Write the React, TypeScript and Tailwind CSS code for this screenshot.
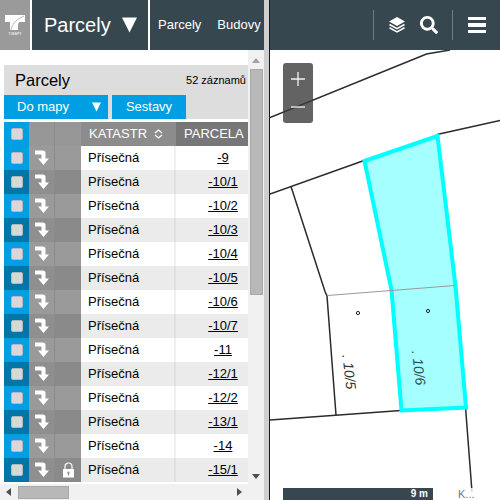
import React from "react";
import { FaSearch } from "react-icons/fa";

const rows = ["-9","-10/1","-10/2","-10/3","-10/4","-10/5","-10/6","-10/7","-11","-12/1","-12/2","-13/1","-14","-15/1"];

function Tri({ className }: { className: string }) {
  return (
    <svg viewBox="0 0 16 16" className={className}>
      <polygon points="0,0 16,0 8,16" fill="#fff" />
    </svg>
  );
}

function Box() {
  return <div className="w-[12px] h-[12px] rounded-[2px] bg-[#d8d8d8] border border-[#b8b8b8]" />;
}

function TurnArrow() {
  return (
    <svg width="16" height="16" viewBox="0 0 16 16">
      <path d="M1 0.5 H9 Q11.5 0.5 11.5 3 V8.5 H15 L9.5 15 L4 8.5 H7.5 V5 Q7.5 4.5 7 4.5 H1 Z" fill="#fff" />
    </svg>
  );
}

function Lock() {
  return (
    <svg width="13" height="16" viewBox="0 0 13 16">
      <path d="M3 7 V4.5 a3.5 3.5 0 0 1 7 0 V7" fill="none" stroke="#fff" strokeWidth="1.2" />
      <path d="M1 7 H12 V15.5 H1 Z M6.5 9.5 a1.2 1.2 0 0 0 -0.6 2.2 V13.5 H7.1 V11.7 a1.2 1.2 0 0 0 -0.6 -2.2 Z" fill="#fff" fillRule="evenodd" />
    </svg>
  );
}

function Logo() {
  return (
    <svg width="20" height="20" viewBox="0 0 20 20">
      <path d="M0 0 H20 V7 H14.5 Q13 8 13 10 V15 H5 V7 H0 Z" fill="#fff" />
      <path d="M6 15 Q7 6 19 1" fill="none" stroke="#9a9a9a" strokeWidth="0.7" />
      <text x="10" y="19.5" textAnchor="middle" fontSize="3.4" fontWeight="700" fill="#e8e8e8" fontFamily="Liberation Sans, sans-serif">T-MAPY</text>
    </svg>
  );
}

function Layers() {
  return (
    <svg width="18" height="16" viewBox="0 0 18 16">
      <polygon points="9,0 17,4.5 9,9 1,4.5" fill="#fff" />
      <path d="M1.5 7.5 L9 11.7 L16.5 7.5" fill="none" stroke="#fff" strokeWidth="1.6" />
      <path d="M1.5 10.7 L9 14.9 L16.5 10.7" fill="none" stroke="#fff" strokeWidth="1.6" />
    </svg>
  );
}

function MapCanvas() {
  return (
    <svg viewBox="270 50 230 450" className="w-full h-full block">
      <g fill="none" stroke="#2b2b2b" strokeWidth="1.5">
        <path d="M270 117.5 L426.5 54 L450 50" />
        <path d="M270 194 L364 160.5" />
        <path d="M437 134.5 L500 120.5" />
        <path d="M291 186.5 L325 291.5 L327 296 L336 415" />
        <path d="M270 420 L401 410.5" />
        <path d="M465.5 407 L472 492" />
      </g>
      <path d="M364.5 161 L437.5 136 L455.5 286 L466 407.5 L401.5 410.5 L391.5 290 Z" fill="#a6ffff" stroke="#00ffff" strokeWidth="4" />
      <path d="M327.5 295.5 L455 285.5" fill="none" stroke="#999" strokeWidth="1" />
      <circle cx="358" cy="313" r="1.6" fill="none" stroke="#222" strokeWidth="1" />
      <circle cx="428" cy="311" r="1.6" fill="none" stroke="#222" strokeWidth="1" />
      <text x="348" y="372" fontSize="14" fontStyle="italic" fill="#333" textAnchor="middle" dominantBaseline="middle" fontFamily="Liberation Sans, sans-serif" transform="rotate(83 348 372)">. 10/5</text>
      <text x="417.5" y="368" fontSize="14" fontStyle="italic" fill="#2c4f55" textAnchor="middle" dominantBaseline="middle" fontFamily="Liberation Sans, sans-serif" transform="rotate(83 417.5 368)">. 10/6</text>
    </svg>
  );
}

export default function App() {
  return (
    <div className="w-[500px] h-[500px] flex overflow-hidden bg-white text-black font-['Liberation_Sans',Arial,sans-serif]">
      {/* Left pane */}
      <div className="w-[264px] h-full flex flex-col shrink-0">
        <div className="h-[50px] flex shrink-0 bg-white">
          <div className="w-[30px] bg-[#9a9a9a] flex items-center justify-center">
            <Logo />
          </div>
          <div className="w-[116px] ml-[2px] bg-[#37474f] flex items-center text-white pl-[12px]">
            <span className="text-[20px] leading-none">Parcely</span>
            <Tri className="w-[15px] h-[16px] ml-[11px]" />
          </div>
          <div className="flex-1 ml-[2px] bg-[#37474f] flex items-center text-white text-[13px] pl-[8px] gap-[16px]">
            <span>Parcely</span>
            <span>Budovy</span>
          </div>
        </div>
        <div className="flex-1 flex flex-col min-h-0">
          <div className="flex-1 flex min-h-0">
            <div className="w-[248px] pl-[4px] pt-[15px] overflow-hidden shrink-0">
              <div className="h-[30px] bg-[#dddddd] flex items-center justify-between pl-[11px] pr-[2px]">
                <span className="text-[16.5px]">Parcely</span>
                <span className="text-[11px]">52 záznamů</span>
              </div>
              <div className="h-[24px] flex bg-[#dddddd] gap-[4px]">
                <div className="w-[104px] bg-[#009fe3] text-white text-[13px] flex items-center pl-[13px]">
                  <span>Do mapy</span>
                  <Tri className="w-[9px] h-[10px] ml-[23px]" />
                </div>
                <div className="w-[74px] bg-[#009fe3] text-white text-[13px] flex items-center justify-center">Sestavy</div>
              </div>
              <div className="h-[3px]" />
              <div className="h-[24px] flex text-white text-[13px]">
                <div className="w-[25px] bg-[#009fe3] flex items-center justify-center"><Box /></div>
                <div className="w-[26px] bg-[#979797] border-r border-[#8c8c8c]" />
                <div className="w-[26px] bg-[#979797]" />
                <div className="w-[95px] bg-[#8c8c8c] flex items-center pl-[8px]">
                  <span>KATASTR</span>
                  <svg width="9" height="10" viewBox="0 0 9 10" className="ml-[7px]">
                    <path d="M1 4 L4.5 1 L8 4 M1 6 L4.5 9 L8 6" fill="none" stroke="#fff" strokeWidth="1.2" />
                  </svg>
                </div>
                <div className="flex-1 bg-[#777777] flex items-center pl-[8px]">PARCELA</div>
              </div>
              {rows.map((r, i) => {
                const dark = i % 2 === 1;
                return (
                  <div key={r} className="h-[24px] flex text-[13px]">
                    <div className={`w-[25px] flex items-center justify-center ${dark ? "bg-[#0075a8]" : "bg-[#009fe3]"}`}><Box /></div>
                    <div className={`w-[26px] flex items-center justify-center border-r border-[#8c8c8c] ${dark ? "bg-[#8f8f8f]" : "bg-[#9a9a9a]"}`}><TurnArrow /></div>
                    <div className={`w-[26px] flex items-center justify-center ${dark ? "bg-[#8a8a8a]" : "bg-[#9a9a9a]"}`}>{i === 13 ? <Lock /> : null}</div>
                    <div className={`w-[95px] flex items-center pl-[7px] border-r-2 ${dark ? "bg-[#ebebeb] border-[#e0e0e0]" : "bg-white border-[#f0f0f0]"}`}>Přísečná</div>
                    <div className={`flex-1 flex items-center justify-center pl-[22px] underline ${dark ? "bg-[#ebebeb]" : "bg-white"}`}>{r}</div>
                  </div>
                );
              })}
            </div>
            <div className="flex-1 bg-[#f1f1f1] flex flex-col items-center pt-[8px] pb-[5px]">
              <svg width="8" height="5" viewBox="0 0 8 5"><polygon points="4,0 8,5 0,5" fill="#a3a3a3" /></svg>
              <div className="w-[13px] h-[226px] mt-[6px] bg-[#b8b8b8] border border-[#a8a8a8]" />
              <div className="flex-1" />
              <svg width="8" height="5" viewBox="0 0 8 5"><polygon points="0,0 8,0 4,5" fill="#505050" /></svg>
            </div>
          </div>
          <div className="h-[16px] bg-[#f1f1f1] flex items-center pl-[6px] pr-[22px] shrink-0">
            <svg width="5" height="8" viewBox="0 0 5 8"><polygon points="5,0 5,8 0,4" fill="#505050" /></svg>
            <div className="w-[51px] h-[13px] ml-[7px] bg-[#b8b8b8] border border-[#a8a8a8]" />
            <div className="flex-1" />
            <svg width="5" height="8" viewBox="0 0 5 8"><polygon points="0,0 5,4 0,8" fill="#505050" /></svg>
          </div>
        </div>
      </div>
      {/* Splitter */}
      <div className="w-[5px] h-full bg-[#cfcfcf] shrink-0" />
      <div className="w-[1px] h-full bg-[#1a1a1a] shrink-0" />
      {/* Right pane */}
      <div className="flex-1 h-full flex flex-col min-w-0">
        <div className="h-[50px] bg-[#37474f] flex items-center justify-end shrink-0">
          <div className="w-[1px] h-[30px] bg-[#6f7e85]" />
          <div className="ml-[14px]"><Layers /></div>
          <FaSearch className="ml-[14px] text-white" size={18} />
          <div className="w-[1px] h-[30px] bg-[#6f7e85] ml-[14px]" />
          <div className="ml-[15px] mr-[14px] w-[18px] flex flex-col gap-[3px]">
            <div className="h-[3.5px] bg-white" />
            <div className="h-[3.5px] bg-white" />
            <div className="h-[3.5px] bg-white" />
          </div>
        </div>
        <div className="flex-1 relative min-h-0">
          <MapCanvas />
          <div className="absolute left-[13px] top-[13px] w-[30px] h-[60px] rounded-[3px] bg-[#3c3c3c]/80 flex flex-col items-center justify-around text-white py-[2px]">
            <svg width="14" height="14" viewBox="0 0 14 14"><path d="M7 0 V14 M0 7 H14" stroke="#f2f2f2" strokeWidth="1.3" /></svg>
            <svg width="14" height="14" viewBox="0 0 14 14"><path d="M0 7 H14" stroke="#f2f2f2" strokeWidth="1.3" /></svg>
          </div>
          <div className="absolute left-[13px] bottom-0 w-[150px] h-[12px] bg-[#37474f] text-white text-[10px] font-bold flex items-center justify-end pr-[5px] leading-none">9 m</div>
          <div className="absolute left-[183px] bottom-0 w-[33px] h-[12px] bg-white/80 text-[#777] text-[11px] flex items-center pl-[5px] leading-none">K...</div>
        </div>
      </div>
    </div>
  );
}
